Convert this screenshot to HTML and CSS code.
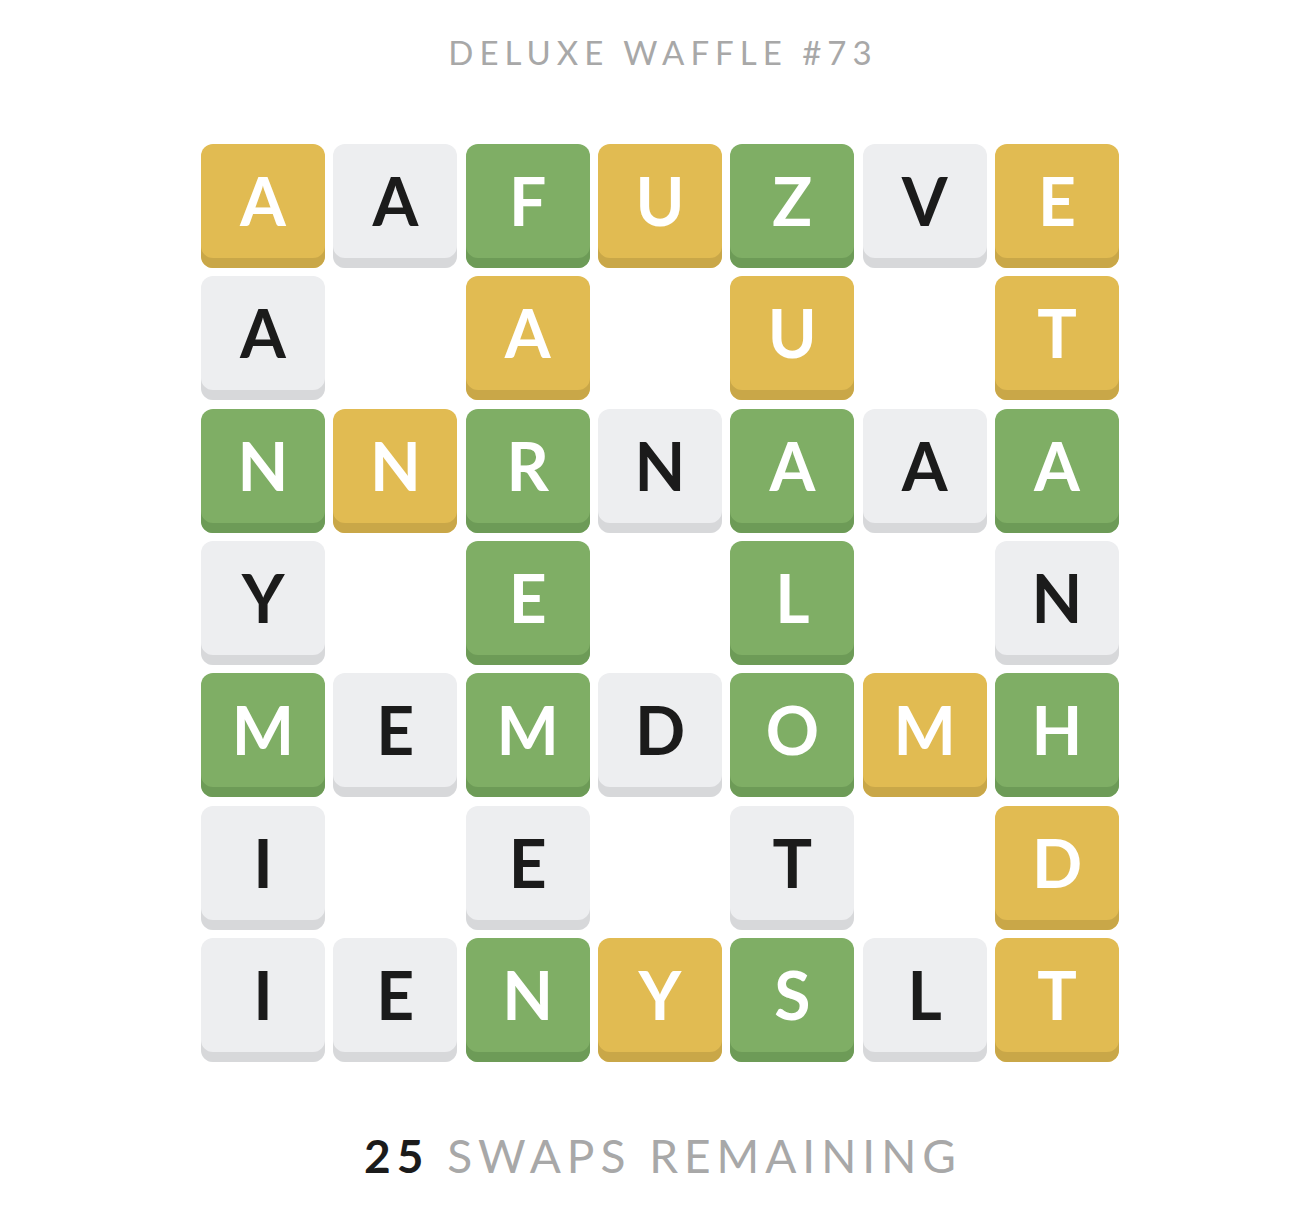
FILE: index.html
```html
<!DOCTYPE html>
<html>
<head>
<meta charset="utf-8">
<link rel="stylesheet" href="styles.css">
</head>
<body>
<main class="page">
  <h1 class="title">DELUXE WAFFLE #73</h1>
  <div class="board">
    <div class="tile yellow">A</div><div class="tile grey">A</div><div class="tile green">F</div><div class="tile yellow">U</div><div class="tile green">Z</div><div class="tile grey">V</div><div class="tile yellow">E</div>
    <div class="tile grey">A</div><div class="gap"></div><div class="tile yellow">A</div><div class="gap"></div><div class="tile yellow">U</div><div class="gap"></div><div class="tile yellow">T</div>
    <div class="tile green">N</div><div class="tile yellow">N</div><div class="tile green">R</div><div class="tile grey">N</div><div class="tile green">A</div><div class="tile grey">A</div><div class="tile green">A</div>
    <div class="tile grey">Y</div><div class="gap"></div><div class="tile green">E</div><div class="gap"></div><div class="tile green">L</div><div class="gap"></div><div class="tile grey">N</div>
    <div class="tile green">M</div><div class="tile grey">E</div><div class="tile green">M</div><div class="tile grey">D</div><div class="tile green">O</div><div class="tile yellow">M</div><div class="tile green">H</div>
    <div class="tile grey">I</div><div class="gap"></div><div class="tile grey">E</div><div class="gap"></div><div class="tile grey">T</div><div class="gap"></div><div class="tile yellow">D</div>
    <div class="tile grey">I</div><div class="tile grey">E</div><div class="tile green">N</div><div class="tile yellow">Y</div><div class="tile green">S</div><div class="tile grey">L</div><div class="tile yellow">T</div>
  </div>
  <p class="swaps"><span class="count">25</span> SWAPS REMAINING</p>
</main>
</body>
</html>
```

FILE: styles.css
```css
html, body {
  margin: 0;
  padding: 0;
  background: #ffffff;
}
.page {
  display: flex;
  flex-direction: column;
  align-items: center;
  padding-left: 20px;
  box-sizing: border-box;
  width: 100%;
}
.title {
  margin: 32px -6px 0 0;
  font-family: "Lato", "Liberation Sans", sans-serif;
  font-weight: 400;
  font-size: 33px;
  line-height: 40px;
  letter-spacing: 6px;
  color: #a8a8a8;
}
.board {
  margin-top: 72px;
  display: grid;
  grid-template-columns: repeat(7, 124px);
  grid-auto-rows: 124px;
  gap: 8.33px;
}
.tile {
  border-radius: 12px;
  display: flex;
  align-items: center;
  justify-content: center;
  padding-bottom: 10px;
  box-sizing: border-box;
  font-family: "Lato", "Liberation Sans", sans-serif;
  font-weight: 700;
  font-size: 66px;
  line-height: 1;
}
.yellow {
  background: #e1bb52;
  box-shadow: inset 0 -10px 0 #c9a748;
  color: #ffffff;
}
.green {
  background: #7fae65;
  box-shadow: inset 0 -10px 0 #6d9b57;
  color: #ffffff;
}
.grey {
  background: #edeef0;
  box-shadow: inset 0 -10px 0 #d7d8da;
  color: #1b1b1b;
}
.swaps {
  margin: 66px -6px 0 0;
  font-family: "Lato", "Liberation Sans", sans-serif;
  font-weight: 400;
  font-size: 46px;
  line-height: 56px;
  letter-spacing: 6px;
  color: #a8a8a8;
}
.count {
  font-weight: 700;
  color: #1b1b1b;
}
```
